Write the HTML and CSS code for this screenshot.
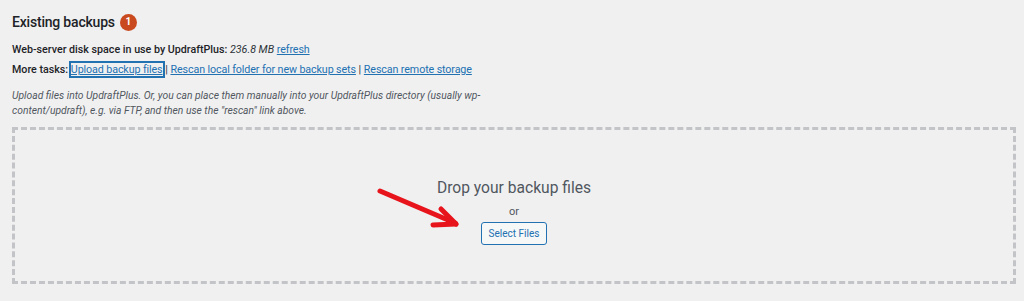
FILE: index.html
```html
<!DOCTYPE html>
<html lang="en">

<head>
    <meta charset="UTF-8">
    <meta name="viewport" content="width=device-width, initial-scale=1.0">
    <title>Existing backups</title>
    <link rel="stylesheet" href="styles.css">
</head>

<body>
    <div class="wrap">
        <h2 class="title">Existing backups <span class="badge">1</span></h2>

        <p class="disk">
            <strong>Web-server disk space in use by UpdraftPlus:</strong> <em>236.8 MB</em> <a href="#">refresh</a><br>
            <strong>More tasks:</strong> <a href="#" class="focused">Upload backup files</a> | <a href="#">Rescan local folder for new backup sets</a> | <a href="#">Rescan remote storage</a>
        </p>

        <p class="hint">Upload files into UpdraftPlus. Or, you can place them manually into your UpdraftPlus directory (usually wp-<br>content/updraft), e.g. via FTP, and then use the "rescan" link above.</p>

        <div class="dropzone">
            <p class="drop-title">Drop your backup files</p>
            <p class="drop-or">or</p>
            <button type="button" class="select-btn">Select Files</button>

            <!-- red pointer arrow -->
            <svg class="arrow" width="100" height="52" viewBox="0 0 100 52">
                <g stroke="#e8141b" stroke-width="5" stroke-linecap="round" fill="none">
                    <line x1="10" y1="11" x2="85" y2="43" />
                    <line x1="71" y1="29" x2="86" y2="44" />
                    <line x1="63" y1="45" x2="86" y2="44" />
                </g>
            </svg>
        </div>
    </div>
</body>

</html>
```

FILE: styles.css
```css
/* General Styles */
body {
    margin: 0;
    font-family: 'Roboto', 'Noto Sans', sans-serif;
    background-color: #f0f0f1;
    color: #3c434a;
    font-size: 10.7px;
}

.wrap {
    padding: 11px 8px 0 12px;
}

.title {
    display: flex;
    align-items: center;
    gap: 5px;
    margin: 0 0 7px;
    font-size: 14px;
    font-weight: 500;
    letter-spacing: -0.2px;
    color: #1d2327;
    line-height: 22px;
}

.badge {
    display: inline-flex;
    align-items: center;
    justify-content: center;
    width: 17px;
    height: 17px;
    border-radius: 50%;
    background-color: #ca4a1f;
    color: #fff;
    font-size: 10px;
    font-weight: 700;
    letter-spacing: 0;
}

.disk {
    margin: 0;
    line-height: 20px;
    color: #2c3338;
}

.disk strong {
    font-weight: 500;
    color: #1d2327;
}

.disk a {
    color: #2271b1;
    text-decoration: underline;
    letter-spacing: -0.1px;
}

.disk .focused {
    outline: 2px solid #2271b1;
    box-shadow: 0 0 0 1px #72aee6;
}

.hint {
    margin: 8px 0 9px;
    font-size: 10.3px;
    font-style: italic;
    line-height: 15px;
    color: #50575e;
}

.dropzone {
    position: relative;
    height: 151px;
    border: 3px dashed #c3c4c7;
    text-align: center;
}

.drop-title {
    margin: 47px 0 0;
    font-size: 15.6px;
    line-height: 22px;
    color: #50575e;
}

.drop-or {
    margin: 5px 0 0;
    font-size: 11px;
    line-height: 16px;
    color: #50575e;
}

.select-btn {
    margin-top: 2px;
    padding: 0 7px;
    height: 23px;
    font-family: inherit;
    font-size: 10px;
    color: #2271b1;
    background-color: #f6f7f7;
    border: 1px solid #2271b1;
    border-radius: 3px;
    cursor: pointer;
}

.arrow {
    position: absolute;
    left: 355px;
    top: 50px;
}
```
